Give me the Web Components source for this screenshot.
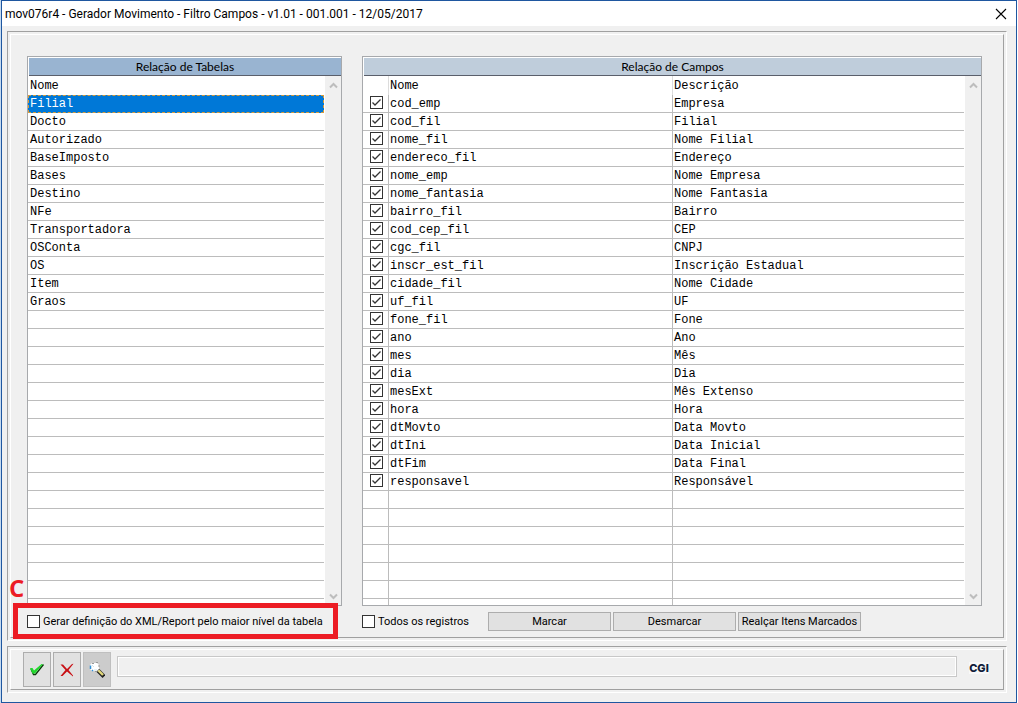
<!DOCTYPE html>
<html lang="pt-BR">
<head>
<meta charset="utf-8">
<title>mov076r4 - Gerador Movimento</title>
<style>
  html, body { height: 100%; margin: 0; }
  body { box-sizing: border-box; border-left: 1px solid #c5daf0; border-right: 1px solid #fff; background: #f0f0f0; color: #000; }
</style>
</head>
<body>
<app-window caption="mov076r4 - Gerador Movimento - Filtro Campos - v1.01 - 001.001 - 12/05/2017">
  <bevel-panel class="main">
    <filter-form></filter-form>
  </bevel-panel>
  <bevel-panel>
    <status-toolbar></status-toolbar>
  </bevel-panel>
</app-window>

<script>
const define = (name, html, setup) => {
  const template = document.createElement('template');
  template.innerHTML = html;
  customElements.define(name, class extends HTMLElement {
    connectedCallback() {
      if (this.shadowRoot) return;
      const root = this.attachShadow({ mode: 'open' });
      root.append(template.content.cloneNode(true));
      if (setup) setup(this, root);
    }
  });
};

define('app-window', `
  <style>
    :host { display: flex; flex-direction: column; box-sizing: border-box; height: 100%; border: 1px solid #1f57a0; background: #f0f0f0; }
    header { display: flex; align-items: center; justify-content: space-between; height: 25px; padding: 0 9px 0 3px; background: #fff; }
    h1 { margin: 0; font: 12px/16px Roboto, sans-serif; white-space: nowrap; }
    button { display: flex; padding: 0; border: 0; background: none; }
    main { flex: 1; min-height: 0; display: flex; flex-direction: column; gap: 5px; padding: 5px 9px 9px 5px; }
    ::slotted(.main) { flex: 1; min-height: 0; }
  </style>
  <header><h1></h1>
    <button type="button" aria-label="Fechar"><svg width="12" height="12" viewBox="0 0 12 12"><path d="M1 1L11 11M11 1L1 11" stroke="#000" stroke-width="1.1"/></svg></button>
  </header>
  <main><slot></slot></main>`,
  (host, root) => { root.querySelector('h1').textContent = host.getAttribute('caption'); });

define('bevel-panel', `
  <style>
    :host { display: flex; box-sizing: border-box; padding: 2px; border: 1px solid; border-color: #a0a0a0 #fff #fff #a0a0a0; }
    div { flex: 1; min-width: 0; display: flex; border: 1px solid; border-color: #fff #a0a0a0 #a0a0a0 #fff; }
    ::slotted(*) { flex: 1; min-width: 0; }
  </style>
  <div><slot></slot></div>`);

define('grid-frame', `
  <style>
    :host { display: flex; flex-direction: column; box-sizing: border-box; min-width: 0; min-height: 0; border: 1px solid #a7a9ac; background: #fff; }
    h2 { margin: 1px 0 0 1px; height: 17px; border-bottom: 1px solid #5a5f6b; background: var(--heading, #99b4d1); font: 12px/18px Lato, sans-serif; text-align: center; }
    .body { flex: 1; min-height: 0; display: flex; gap: 1px; }
    .rows { flex: 1; min-width: 0; overflow: hidden; }
    .scroll { width: 16px; box-sizing: border-box; padding: 6px 0 5px; background: #f0f0f0; display: flex; flex-direction: column; justify-content: space-between; align-items: center; }
    svg { fill: none; stroke: #bdbdbd; stroke-width: 2; }
  </style>
  <h2></h2>
  <div class="body">
    <div class="rows"><slot></slot></div>
    <div class="scroll">
      <svg width="9" height="7" viewBox="0 0 9 7"><path d="M1 5.5L4.5 2L8 5.5"/></svg>
      <svg width="9" height="7" viewBox="0 0 9 7"><path d="M1 1.500L4.500 5L8 1.500"/></svg>
    </div>
  </div>`,
  (host, root) => { root.querySelector('h2').textContent = host.getAttribute('heading'); });

const tableStyle = `
  <style>
    :host { display: block; }
    table { width: 100%; table-layout: fixed; border-collapse: separate; border-spacing: 0; font: 12px/15px "Liberation Mono", monospace; }
    th, td { box-sizing: border-box; height: 18px; padding: 2px 0 0 2px; text-align: left; font-weight: normal; white-space: nowrap; overflow: hidden; }
    th { height: 19px; }
    td { border-bottom: 1px solid #bcbcbc; }
    .sel td { background: #0078d7; color: #fff; border-bottom-color: #0078d7; outline: 1px dashed #d59a3c; outline-offset: -1px; }
  </style>`;
const ROWS = 29;

const TABLES = ['Filial','Docto','Autorizado','BaseImposto','Bases','Destino','NFe','Transportadora','OSConta','OS','Item','Graos'];
define('table-list', tableStyle + `<table><thead><tr><th>Nome</th></tr></thead><tbody></tbody></table>`,
  (host, root) => {
    const body = root.querySelector('tbody');
    for (let i = 0; i < ROWS; i++) {
      const row = body.insertRow();
      row.insertCell().textContent = TABLES[i] || '';
      if (i === 0) row.className = 'sel';
    }
  });

const FIELDS = [['cod_emp','Empresa'],['cod_fil','Filial'],['nome_fil','Nome Filial'],['endereco_fil','Endereço'],['nome_emp','Nome Empresa'],['nome_fantasia','Nome Fantasia'],['bairro_fil','Bairro'],['cod_cep_fil','CEP'],['cgc_fil','CNPJ'],['inscr_est_fil','Inscrição Estadual'],['cidade_fil','Nome Cidade'],['uf_fil','UF'],['fone_fil','Fone'],['ano','Ano'],['mes','Mês'],['dia','Dia'],['mesExt','Mês Extenso'],['hora','Hora'],['dtMovto','Data Movto'],['dtIni','Data Inicial'],['dtFim','Data Final'],['responsavel','Responsável']];
define('field-list', tableStyle + `
  <style>
    col.check { width: 26px; }
    col.name { width: 284px; }
    th + th, td + td { padding-left: 1px; }
    th:not(:last-child) { border-right: 1px solid #dcdcdc; }
    td:not(:last-child) { border-right: 1px solid #bcbcbc; }
    td:first-child { padding: 0 0 0 7px; line-height: 0; vertical-align: top; }
    check-box { margin-top: 1px; }
  </style>
  <table><colgroup><col class="check"><col class="name"><col></colgroup>
  <thead><tr><th></th><th>Nome</th><th>Descrição</th></tr></thead><tbody></tbody></table>`,
  (host, root) => {
    const body = root.querySelector('tbody');
    for (let i = 0; i < ROWS; i++) {
      const row = body.insertRow(), mark = row.insertCell();
      const [name, description] = FIELDS[i] || ['', ''];
      if (name) {
        const box = document.createElement('check-box');
        box.setAttribute('checked', '');
        box.setAttribute('label', name);
        mark.append(box);
      }
      row.insertCell().textContent = name;
      row.insertCell().textContent = description;
    }
  });

define('check-box', `
  <style>
    :host { display: block; }
    label { display: flex; align-items: center; gap: 3px; font: 11px/13px Roboto, sans-serif; white-space: nowrap; }
    .box { display: grid; width: 13px; height: 13px; flex: none; }
    input, svg { grid-area: 1 / 1; }
    input { appearance: none; box-sizing: border-box; width: 13px; height: 13px; margin: 0; border: 1px solid #333; background: #fff; }
    svg { visibility: hidden; pointer-events: none; }
    input:checked + svg { visibility: visible; }
  </style>
  <label><span class="box"><input type="checkbox"><svg width="13" height="13" viewBox="0 0 13 13"><path d="M2.500 6.500L5 9L10.500 3.500" fill="none" stroke="#333" stroke-width="1.300"/></svg></span><slot></slot></label>`,
  (host, root) => {
    const input = root.querySelector('input');
    input.checked = host.hasAttribute('checked');
    if (host.hasAttribute('label')) input.setAttribute('aria-label', host.getAttribute('label'));
  });

define('call-out', `
  <style>
    :host { display: block; position: relative; }
    .ring { position: absolute; inset: -12px -21px -11px -14px; border: 5px solid #ec1c24; pointer-events: none; }
    b { position: absolute; left: -18px; top: -39px; color: #ec1c24; font: bold 24px/24px "Open Sans", sans-serif; }
  </style>
  <slot></slot><div class="ring"></div><b></b>`,
  (host, root) => { root.querySelector('b').textContent = host.getAttribute('mark'); });

define('push-button', `
  <style>
    :host { display: block; width: 123px; }
    button { display: block; box-sizing: border-box; width: 100%; height: 19px; padding: 0; border: 1px solid #adadad; background: #e1e1e1; color: #000; font: 11px/18px Roboto, sans-serif; white-space: nowrap; }
  </style>
  <button type="button"><slot></slot></button>`);

define('filter-form', `
  <style>
    :host { display: grid; grid-template: 1fr 31px / 315fr 620fr; column-gap: 20px; padding: 21px 21px 0 16px; min-height: 0; }
    .foot { display: flex; align-items: center; min-width: 0; }
    .foot > check-box { width: 104px; }
    .buttons { display: flex; gap: 2px; margin-left: 22px; }
    call-out { width: 290px; }
    .pale { --heading: #bfcddb; }
  </style>
  <grid-frame heading="Relação de Tabelas"><table-list></table-list></grid-frame>
  <grid-frame class="pale" heading="Relação de Campos"><field-list></field-list></grid-frame>
  <div class="foot"><call-out mark="C"><check-box>Gerar definição do XML/Report pelo maior nível da tabela</check-box></call-out></div>
  <div class="foot"><check-box>Todos os registros</check-box>
    <div class="buttons"><push-button>Marcar</push-button><push-button>Desmarcar</push-button><push-button>Realçar Itens Marcados</push-button></div>
  </div>`);

define('tool-button', `
  <style>
    :host { display: block; }
    button { display: flex; align-items: center; justify-content: center; box-sizing: border-box; width: 28px; height: 35px; padding: 0; border: 1px solid #adadad; background: #e1e1e1; }
    :host([pressed]) button { background: #ccc; border-color: #bfbfbf; }
  </style>
  <button type="button"><slot></slot></button>`,
  (host, root) => root.querySelector('button').setAttribute('aria-label', host.getAttribute('label')));

define('status-toolbar', `
  <style>
    :host { display: flex; align-items: flex-start; gap: 2px; padding: 2px 14px 2px 12px; }
    input { flex: 1; min-width: 0; box-sizing: border-box; height: 21px; margin: 4px 10px 0 4px; padding: 0 4px; border: 1px solid #c8c8c8; background: #f0f0f0; box-shadow: inset 0 0 0 1px #fff; font: 11px/17px Roboto, sans-serif; }
    .logo { width: 20px; margin-top: 10px; background: #f8f8f8; color: #101c3a; font: 800 11px/12px Inter, sans-serif; text-align: center; white-space: nowrap; }
  </style>
  <tool-button label="Confirmar"><svg width="16" height="16" viewBox="0 0 16 16"><path d="M2 7L4.500 12.500H6.500L14.500 2.500" fill="none" stroke="#0a3a0a" stroke-width="1.300"/><path d="M1 6H3.500L5 8.500L12.500 2H14L6 11.500H3.500Z" fill="#1fd92b"/></svg></tool-button>
  <tool-button label="Cancelar"><svg width="16" height="16" viewBox="0 0 16 16"><path d="M1.500 2.500H4L8 7L13 2L14.500 1.800L9.500 8L14 13.500V14.500L8 9.500L3.500 14H1.500L6.500 8Z" fill="#c80f14"/></svg></tool-button>
  <tool-button pressed label="Pesquisar"><svg width="16" height="16" viewBox="0 0 16 16"><path d="M9 8.500L15 14.500" stroke="#222" stroke-width="4"/><path d="M9 8L14 13" stroke="#e3d97a" stroke-width="2.400"/><path d="M3 1H8L10 3V7L8 9H3L1 7V3Z" fill="#fff"/><path d="M3 1.500H5M7 .5H9M10 3V5M10 7L8 9.500H6" fill="none" stroke="#999"/><path d="M1.500 3.500V7M3 8L4 9" fill="none" stroke="#2f8fd6" stroke-width="1.500"/><path d="M3 3L5 5M5 8H8" stroke="#cfe4ee"/></svg></tool-button>
  <input type="text" aria-label="Mensagem" readonly>
  <span class="logo">CGI</span>`);
</script>
</body>
</html>
